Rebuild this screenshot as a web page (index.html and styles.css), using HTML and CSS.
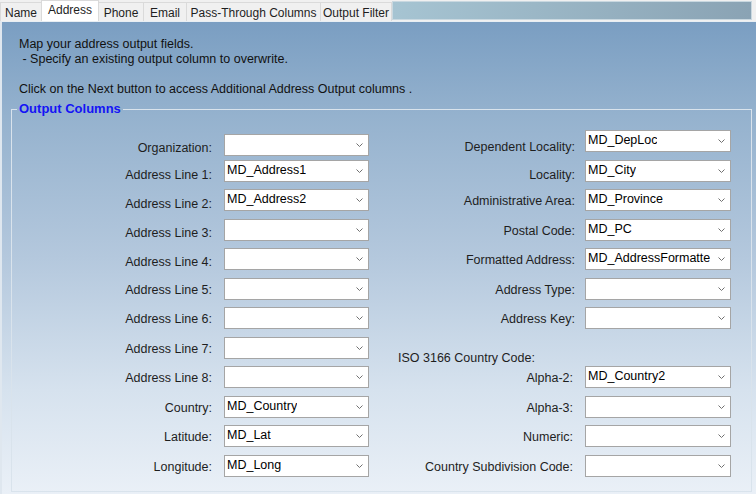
FILE: index.html
```html
<!DOCTYPE html>
<html lang="en">
<head>
    <meta charset="UTF-8">
    <meta name="viewport" content="width=device-width, initial-scale=1.0">
    <title>Address Output</title>
    <link rel="stylesheet" href="styles.css">
</head>
<body>
    <div class="tabs">
        <div class="tab tab-name">Name</div>
        <div class="tab tab-address active">Address</div>
        <div class="tab tab-phone">Phone</div>
        <div class="tab tab-email">Email</div>
        <div class="tab tab-pass">Pass-Through Columns</div>
        <div class="tab tab-filter">Output Filter</div>
        <div class="tab-fill"></div>
    </div>

    <div class="panel">
        <p class="intro">Map your address output fields.<br>&nbsp;- Specify an existing output column to overwrite.</p>
        <p class="intro next">Click on the Next button to access Additional Address Output columns .</p>

        <fieldset class="group">
            <legend>Output Columns</legend>
            <div class="fields">
                <label class="lbl low-org">Organization:</label>
                <div class="combo first"><span></span><svg class="arrow" width="7" height="4" viewBox="0 0 7 4"><polyline points="0.5,0.5 3.5,3.5 6.5,0.5"/></svg></div>
                <label class="lbl dep">Dependent Locality:</label>
                <div class="combo"><span>MD_DepLoc</span><svg class="arrow" width="7" height="4" viewBox="0 0 7 4"><polyline points="0.5,0.5 3.5,3.5 6.5,0.5"/></svg></div>

                <label class="lbl low">Address Line 1:</label>
                <div class="combo"><span>MD_Address1</span><svg class="arrow" width="7" height="4" viewBox="0 0 7 4"><polyline points="0.5,0.5 3.5,3.5 6.5,0.5"/></svg></div>
                <label class="lbl low">Locality:</label>
                <div class="combo"><span>MD_City</span><svg class="arrow" width="7" height="4" viewBox="0 0 7 4"><polyline points="0.5,0.5 3.5,3.5 6.5,0.5"/></svg></div>

                <label class="lbl low">Address Line 2:</label>
                <div class="combo"><span>MD_Address2</span><svg class="arrow" width="7" height="4" viewBox="0 0 7 4"><polyline points="0.5,0.5 3.5,3.5 6.5,0.5"/></svg></div>
                <label class="lbl">Administrative Area:</label>
                <div class="combo"><span>MD_Province</span><svg class="arrow" width="7" height="4" viewBox="0 0 7 4"><polyline points="0.5,0.5 3.5,3.5 6.5,0.5"/></svg></div>

                <label class="lbl mid">Address Line 3:</label>
                <div class="combo"><span></span><svg class="arrow" width="7" height="4" viewBox="0 0 7 4"><polyline points="0.5,0.5 3.5,3.5 6.5,0.5"/></svg></div>
                <label class="lbl">Postal Code:</label>
                <div class="combo"><span>MD_PC</span><svg class="arrow" width="7" height="4" viewBox="0 0 7 4"><polyline points="0.5,0.5 3.5,3.5 6.5,0.5"/></svg></div>

                <label class="lbl mid">Address Line 4:</label>
                <div class="combo"><span></span><svg class="arrow" width="7" height="4" viewBox="0 0 7 4"><polyline points="0.5,0.5 3.5,3.5 6.5,0.5"/></svg></div>
                <label class="lbl">Formatted Address:</label>
                <div class="combo"><span>MD_AddressFormatte</span><svg class="arrow" width="7" height="4" viewBox="0 0 7 4"><polyline points="0.5,0.5 3.5,3.5 6.5,0.5"/></svg></div>

                <label class="lbl">Address Line 5:</label>
                <div class="combo"><span></span><svg class="arrow" width="7" height="4" viewBox="0 0 7 4"><polyline points="0.5,0.5 3.5,3.5 6.5,0.5"/></svg></div>
                <label class="lbl">Address Type:</label>
                <div class="combo"><span></span><svg class="arrow" width="7" height="4" viewBox="0 0 7 4"><polyline points="0.5,0.5 3.5,3.5 6.5,0.5"/></svg></div>

                <label class="lbl">Address Line 6:</label>
                <div class="combo"><span></span><svg class="arrow" width="7" height="4" viewBox="0 0 7 4"><polyline points="0.5,0.5 3.5,3.5 6.5,0.5"/></svg></div>
                <label class="lbl">Address Key:</label>
                <div class="combo"><span></span><svg class="arrow" width="7" height="4" viewBox="0 0 7 4"><polyline points="0.5,0.5 3.5,3.5 6.5,0.5"/></svg></div>

                <label class="lbl">Address Line 7:</label>
                <div class="combo"><span></span><svg class="arrow" width="7" height="4" viewBox="0 0 7 4"><polyline points="0.5,0.5 3.5,3.5 6.5,0.5"/></svg></div>
                <div class="iso">ISO 3166 Country Code:</div>

                <label class="lbl">Address Line 8:</label>
                <div class="combo"><span></span><svg class="arrow" width="7" height="4" viewBox="0 0 7 4"><polyline points="0.5,0.5 3.5,3.5 6.5,0.5"/></svg></div>
                <label class="lbl">Alpha-2:</label>
                <div class="combo"><span>MD_Country2</span><svg class="arrow" width="7" height="4" viewBox="0 0 7 4"><polyline points="0.5,0.5 3.5,3.5 6.5,0.5"/></svg></div>

                <label class="lbl">Country:</label>
                <div class="combo"><span>MD_Country</span><svg class="arrow" width="7" height="4" viewBox="0 0 7 4"><polyline points="0.5,0.5 3.5,3.5 6.5,0.5"/></svg></div>
                <label class="lbl">Alpha-3:</label>
                <div class="combo"><span></span><svg class="arrow" width="7" height="4" viewBox="0 0 7 4"><polyline points="0.5,0.5 3.5,3.5 6.5,0.5"/></svg></div>

                <label class="lbl">Latitude:</label>
                <div class="combo"><span>MD_Lat</span><svg class="arrow" width="7" height="4" viewBox="0 0 7 4"><polyline points="0.5,0.5 3.5,3.5 6.5,0.5"/></svg></div>
                <label class="lbl">Numeric:</label>
                <div class="combo"><span></span><svg class="arrow" width="7" height="4" viewBox="0 0 7 4"><polyline points="0.5,0.5 3.5,3.5 6.5,0.5"/></svg></div>

                <label class="lbl">Longitude:</label>
                <div class="combo"><span>MD_Long</span><svg class="arrow" width="7" height="4" viewBox="0 0 7 4"><polyline points="0.5,0.5 3.5,3.5 6.5,0.5"/></svg></div>
                <label class="lbl">Country Subdivision Code:</label>
                <div class="combo"><span></span><svg class="arrow" width="7" height="4" viewBox="0 0 7 4"><polyline points="0.5,0.5 3.5,3.5 6.5,0.5"/></svg></div>
            </div>
        </fieldset>
    </div>
</body>
</html>
```

FILE: styles.css
```css
body {
    margin: 0;
    font-family: "Liberation Sans", Arial, sans-serif;
    font-size: 12.5px;
    color: #1e1e1e;
    background-color: #f0f0f0;
    width: 756px;
    height: 494px;
    overflow: hidden;
}
.tabs {
    display: flex;
    align-items: flex-end;
    height: 21px;
    background-color: #f0f0f0;
}
.tab {
    box-sizing: border-box;
    height: 19px;
    padding-top: 3px;
    font-size: 12px;
    line-height: 14px;
    text-align: center;
    background-color: #f0f0f0;
    border: 1px solid #dadada;
    border-bottom: none;
    margin-right: -1px;
    white-space: nowrap;
}
.tab.active {
    height: 21px;
    padding-top: 2px;
    background-color: #fff;
    position: relative;
}
.tab-name { width: 42px; }
.tab-address { width: 58px; }
.tab-phone { width: 46px; }
.tab-email { width: 44px; }
.tab-pass { width: 135px; }
.tab-filter { width: 72px; }
.tab-fill {
    flex: 1;
    align-self: stretch;
    margin: 1px 4px 1px 1px;
    background: linear-gradient(to right, #a6c4d2, #8aa3b4);
    border: 1px solid #c9d8e0;
}
.panel {
    box-sizing: border-box;
    height: 473px;
    padding: 15px 4px 0 11px;
    border-top: 1px solid #e8eef3;
    border-left: 2px solid #dfe7ef;
    background: linear-gradient(to bottom, #7a9ec2 0%, #95b2ce 20%, #b4c8dd 50%, #d6e2ee 78%, #eaf0f7 100%);
}
.intro {
    margin: 0 0 0 6px;
    line-height: 15px;
    color: #111;
}
.intro.next {
    margin-top: 15px;
}
.group {
    margin: 4px 0 0 -2px;
    padding: 13px 0 14px 8px;
    border: 1px solid #d9e3ec;
    min-width: 0;
}
.group legend {
    margin-left: -3px;
    padding: 0 2px;
    font-size: 13px;
    font-weight: bold;
    line-height: 16px;
    color: #1414f5;
}
.fields {
    display: grid;
    grid-template-columns: 204px 145px 216px 146px;
    grid-auto-rows: 22px;
    row-gap: 7.5px;
}
.lbl {
    padding: 5px 12px 0 0;
    line-height: 14px;
    text-align: right;
    white-space: nowrap;
}
.lbl.dep {
    padding-top: 10px;
}
.lbl.low {
    padding-top: 8px;
}
.lbl.mid {
    padding-top: 7px;
}
.lbl.low-org {
    padding-top: 11px;
}
.fields .lbl:nth-child(4n+3) {
    padding-right: 10px;
}
.iso {
    grid-column: 3 / 5;
    padding: 14px 0 0 29px;
    line-height: 14px;
    white-space: nowrap;
}
.combo {
    box-sizing: border-box;
    height: 22px;
    display: flex;
    align-items: flex-start;
    justify-content: space-between;
    padding: 2px 5px 0 2px;
    background-color: #fff;
    border: 1px solid #a5a5a5;
    line-height: 14px;
    color: #000;
    overflow: hidden;
}
.combo.first {
    margin-top: 4px;
}
.combo span {
    white-space: nowrap;
    overflow: hidden;
}
.arrow {
    flex: none;
    margin-top: 6px;
    fill: none;
    stroke: #707070;
    stroke-width: 1;
}
```
